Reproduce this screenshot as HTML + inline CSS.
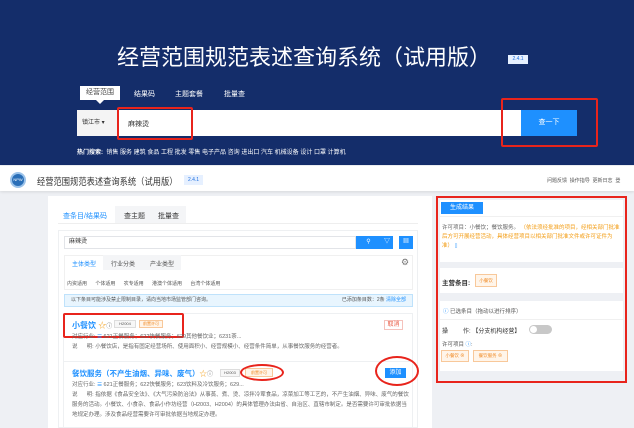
<!DOCTYPE html>
<html><head><meta charset="utf-8"><style>
*{margin:0;padding:0;box-sizing:border-box}
body{width:634px;height:428px;overflow:hidden;position:relative;background:#fff;font-family:"Liberation Sans","Noto Sans CJK SC",sans-serif;}
.a{position:absolute;white-space:nowrap}
</style></head><body>
<!-- top dark -->
<div class="a" style="left:0;top:0;width:634px;height:165px;background:#142d6a"></div>
<div class="a" style="left:117px;top:40px;font-size:22px;color:#fff">经营范围规范表述查询系统（试用版）</div>
<div class="a" style="left:508px;top:55px;width:20px;height:9px;background:#e6f0ff;color:#1e6fe0;font-size:5px;text-align:center;line-height:9px">2.4.1</div>
<div class="a" style="left:80px;top:86px;width:40px;height:14px;background:#fff;color:#444;font-size:7px;text-align:center;line-height:14px">经营范围</div>
<div class="a" style="left:96px;top:100px;width:0;height:0;border-left:4px solid transparent;border-right:4px solid transparent;border-top:4px solid #fff"></div>
<div class="a" style="left:134px;top:89px;color:#fff;font-size:7px">结果码</div>
<div class="a" style="left:175px;top:89px;color:#fff;font-size:7px">主题套餐</div>
<div class="a" style="left:224px;top:89px;color:#fff;font-size:7px">批量查</div>
<div class="a" style="left:77px;top:110px;width:444px;height:26px;background:#fff"></div>
<div class="a" style="left:77px;top:110px;width:40px;height:26px;background:#f4f4f4;font-size:6px;color:#333;line-height:26px;padding-left:5px">镇江市 ▾</div>
<div class="a" style="left:128px;top:119px;font-size:7px;color:#333">麻辣烫</div>
<div class="a" style="left:521px;top:110px;width:56px;height:26px;background:#1e90ff;color:#fff;font-size:7px;text-align:center;line-height:26px">查一下</div>
<div class="a" style="left:117px;top:107px;width:76px;height:33px;border:2px solid #e8241c;border-radius:2px"></div>
<div class="a" style="left:501px;top:98px;width:97px;height:49px;border:2px solid #e8241c;border-radius:2px"></div>
<div class="a" style="left:77px;top:147px;font-size:6px;color:#fff"><b>热门搜索:</b>&nbsp; 销售 服务 建筑 食品 工程 批发 零售 电子产品 咨询 进出口 汽车 机械设备 设计 口罩 计算机</div>
<!-- second screenshot -->
<div class="a" style="left:0;top:165px;width:634px;height:263px;background:#eef0f4"></div>
<div class="a" style="left:0;top:166px;width:634px;height:25px;background:#fff;box-shadow:0 1px 3px rgba(0,0,0,.1)"></div>
<div class="a" style="left:10px;top:172px;width:16px;height:16px;border-radius:50%;background:#2a6fb8;border:2px solid #9cc3ea;color:#fff;font-size:4px;text-align:center;line-height:12px">NPW</div>
<div class="a" style="left:37px;top:174px;font-size:9.5px;color:#333;transform:scaleX(0.87);transform-origin:left top">经营范围规范表述查询系统（试用版）</div>
<div class="a" style="left:184px;top:175px;width:19px;height:10px;background:#e6f0ff;color:#1e6fe0;font-size:5px;text-align:center;line-height:10px">2.4.1</div>
<div class="a" style="left:547px;top:177px;font-size:5px;color:#555">问题反馈&nbsp; 操作指导&nbsp; 更新日志&nbsp; 登</div>
<!-- left card -->
<div class="a" style="left:48px;top:196px;width:384px;height:232px;background:#fff"></div>
<div class="a" style="left:115px;top:206px;width:71px;height:17px;background:#f4f5f7"></div>
<div class="a" style="left:63px;top:211px;font-size:7px;color:#1e90ff">查条目/结果码</div>
<div class="a" style="left:124px;top:211px;font-size:7px;color:#333">查主题</div>
<div class="a" style="left:158px;top:211px;font-size:7px;color:#333">批量查</div>
<div class="a" style="left:58px;top:223px;width:360px;height:1px;background:#eee"></div>
<div class="a" style="left:58px;top:230px;width:360px;height:198px;border:1px solid #eef0f2"></div>
<div class="a" style="left:64px;top:236px;width:292px;height:13px;border:1px solid #e2e4e8;font-size:6px;color:#333;line-height:11px;padding-left:4px">麻辣烫</div>
<div class="a" style="left:356px;top:236px;width:25px;height:13px;background:#1e90ff;color:#fff;font-size:6px;text-align:center;line-height:13px">⚲</div>
<div class="a" style="left:381px;top:236px;width:12px;height:13px;background:#1e90ff;color:#fff;font-size:6px;text-align:center;line-height:13px">▽</div>
<div class="a" style="left:399px;top:236px;width:14px;height:13px;background:#1e90ff;color:#fff;font-size:6px;text-align:center;line-height:13px">▦</div>
<div class="a" style="left:64px;top:255px;width:349px;height:35px;border:1px solid #f0f0f0"></div>
<div class="a" style="left:103px;top:255px;width:78px;height:15px;background:#f4f5f7"></div>
<div class="a" style="left:72px;top:259px;font-size:6px;color:#1e90ff">主体类型</div>
<div class="a" style="left:111px;top:259px;font-size:6px;color:#555">行业分类</div>
<div class="a" style="left:150px;top:259px;font-size:6px;color:#555">产业类型</div>
<div class="a" style="left:401px;top:257px;font-size:9px;color:#777">⚙</div>
<div class="a" style="left:67px;top:280px;font-size:5px;color:#555">内资适用&nbsp;&nbsp;&nbsp;&nbsp;&nbsp; 个体适用&nbsp;&nbsp;&nbsp;&nbsp;&nbsp; 农专适用&nbsp;&nbsp;&nbsp;&nbsp;&nbsp; 港澳个体适用&nbsp;&nbsp;&nbsp;&nbsp;&nbsp; 台湾个体适用</div>
<div class="a" style="left:64px;top:294px;width:349px;height:13px;background:#e8f5fe;border:1px solid #bfe2fb;font-size:5px;color:#555;line-height:11px;padding-left:6px">以下条目可能涉及禁止限制目录，请向当地市场监管部门咨询。<span style="position:absolute;right:6px">已添加条目数：2条 <span style="color:#1e90ff">清除全部</span></span></div>
<!-- item1 -->
<div class="a" style="left:63px;top:313px;width:350px;height:49px;border:1px solid #eef0f2"></div>
<div class="a" style="left:72px;top:320px;font-size:8px;color:#1e90ff;font-weight:bold">小餐饮 <span style="color:#f39c12;font-weight:normal">☆</span><span style="color:#666;font-size:6px;font-weight:normal">ⓘ</span></div>
<div class="a" style="left:114px;top:320px;width:22px;height:8px;border:1px solid #ddd;background:#f7f7f7;font-size:4px;color:#555;text-align:center;line-height:6px">H2004</div>
<div class="a" style="left:139px;top:320px;width:24px;height:8px;border:1px solid #f8c89a;background:#fff5ea;font-size:4px;color:#f08a24;text-align:center;line-height:6px">前置许可</div>
<div class="a" style="left:63px;top:313px;width:121px;height:25px;border:2px solid #e8241c;border-radius:2px"></div>
<div class="a" style="left:384px;top:320px;width:19px;height:10px;border:1px solid #f5c2bc;font-size:6px;color:#e8553e;text-align:center;line-height:8px">取消</div>
<div class="a" style="left:72px;top:332px;font-size:5.5px;color:#666">对应行业: <span style="color:#1e90ff">☰</span> 621正餐服务；622快餐服务；629其他餐饮业；6231茶...</div>
<div class="a" style="left:72px;top:342px;font-size:5.5px;color:#666">说&nbsp;&nbsp;&nbsp;&nbsp;&nbsp; 明: 小餐饮店，是指有固定经营场所、使用面积小、经营规模小、经营条件简单，从事餐饮服务的经营者。</div>
<!-- item2 -->
<div class="a" style="left:63px;top:361px;width:350px;height:67px;border:1px solid #eef0f2"></div>
<div class="a" style="left:72px;top:368px;font-size:7.5px;color:#1e90ff;font-weight:bold">餐饮服务（不产生油烟、异味、废气）<span style="color:#f39c12;font-weight:normal">☆</span><span style="color:#666;font-size:6px;font-weight:normal">ⓘ</span></div>
<div class="a" style="left:220px;top:369px;width:20px;height:8px;border:1px solid #ddd;background:#f7f7f7;font-size:4px;color:#555;text-align:center;line-height:6px">H2003</div>
<div class="a" style="left:245px;top:368px;width:28px;height:9px;border:1px solid #f8c89a;background:#fff5ea;font-size:4px;color:#f08a24;text-align:center;line-height:7px">前置许可</div>
<div class="a" style="left:240px;top:364px;width:44px;height:17px;border:2px solid #e8241c;border-radius:50%"></div>
<div class="a" style="left:385px;top:368px;width:21px;height:10px;background:#1e90ff;font-size:6px;color:#fff;text-align:center;line-height:10px">添加</div>
<div class="a" style="left:375px;top:356px;width:44px;height:30px;border:2px solid #e8241c;border-radius:50%"></div>
<div class="a" style="left:72px;top:380px;font-size:5.5px;color:#666">对应行业: <span style="color:#1e90ff">☰</span> 621正餐服务；622快餐服务；623饮料及冷饮服务；629...</div>
<div class="a" style="left:72px;top:390px;font-size:5.5px;color:#666;line-height:10px;white-space:normal;width:340px">说&nbsp;&nbsp;&nbsp;&nbsp;&nbsp; 明: 指依据《食品安全法》、《大气污染防治法》从事蒸、煮、烫、凉拌冷荤食品，凉菜加工等工艺的，不产生油烟、异味、废气的餐饮服务的活动。小餐饮、小食杂、食品小作坊经营（H2003、H2004）的具体管理办法由省、自治区、直辖市制定。是否需要许可审批依据当地规定办理。涉及食品经营需要许可审批依据当地规定办理。</div>
<!-- right panel -->
<div class="a" style="left:440px;top:200px;width:183px;height:62px;background:#fff"></div>
<div class="a" style="left:441px;top:202px;width:42px;height:12px;background:#1e90ff;color:#fff;font-size:6px;text-align:center;line-height:12px">生成结果</div>
<div class="a" style="left:440px;top:216px;width:183px;height:1px;background:#f0f0f0"></div>
<div class="a" style="left:442px;top:224px;width:178px;font-size:5.5px;color:#666;line-height:9px;white-space:normal">许可项目：小餐饮；餐饮服务。 <span style="color:#f39c12">（依法须经批准的项目，经相关部门批准后方可开展经营活动，具体经营项目以相关部门批准文件或许可证件为准）</span> <span style="color:#1e90ff">▯</span></div>
<div class="a" style="left:440px;top:268px;width:183px;height:25px;background:#fff"></div>
<div class="a" style="left:442px;top:277px;font-size:6.5px;color:#333;font-weight:bold">主营条目:</div>
<div class="a" style="left:475px;top:274px;width:22px;height:13px;border:1px solid #f8c89a;background:#fff5ea;font-size:4.5px;color:#f08a24;text-align:center;line-height:11px">小餐饮</div>
<div class="a" style="left:440px;top:301px;width:183px;height:70px;background:#fff"></div>
<div class="a" style="left:443px;top:307px;font-size:5.5px;color:#555"><span style="color:#1e90ff">ⓘ</span> 已选条目（拖动以进行排序）</div>
<div class="a" style="left:440px;top:319px;width:183px;height:1px;background:#f0f0f0"></div>
<div class="a" style="left:442px;top:326px;font-size:6px;color:#333">操&nbsp;&nbsp;&nbsp;&nbsp;&nbsp;&nbsp;&nbsp;&nbsp; 作: 【分支机构经营】</div>
<div class="a" style="left:529px;top:325px;width:23px;height:9px;border-radius:5px;background:#c8c8c8"></div>
<div class="a" style="left:530px;top:326px;width:7px;height:7px;border-radius:50%;background:#fff"></div>
<div class="a" style="left:442px;top:340px;font-size:5.5px;color:#555">许可项目 <span style="color:#1e90ff">ⓘ</span>:</div>
<div class="a" style="left:441px;top:350px;width:28px;height:12px;border:1px solid #f8c89a;background:#fff5ea;font-size:4.5px;color:#f08a24;text-align:center;line-height:10px">小餐饮 ⊗</div>
<div class="a" style="left:473px;top:350px;width:35px;height:12px;border:1px solid #f8c89a;background:#fff5ea;font-size:4.5px;color:#f08a24;text-align:center;line-height:10px">餐饮服务 ⊗</div>
<div class="a" style="left:436px;top:196px;width:191px;height:187px;border:2px solid #e8241c"></div>
</body></html>
